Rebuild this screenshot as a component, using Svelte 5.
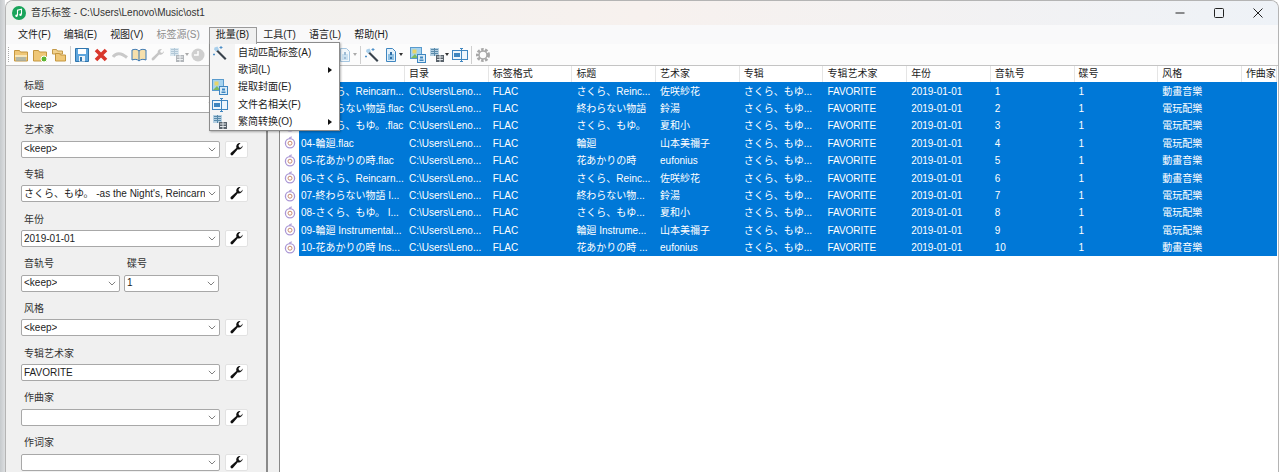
<script>
  const cols = ['', '目录', '标签格式', '标题', '艺术家', '专辑', '专辑艺术家', '年份', '音轨号', '碟号', '风格', '作曲家'];
  const widths = [125, 83.7, 83.7, 83.7, 83.7, 83.7, 83.7, 83.7, 83.7, 83.7, 83.7, 35];
  const G1 = '動畫音樂', G2 = '電玩配樂';
  const rows = [
    ['01-さくら、Reincarn...', 'さくら、Reinc...', '佐咲紗花', G1],
    ['02-終わらない物語.flac', '終わらない物語', '鈴湯', G2],
    ['03-さくら、もゆ。.flac', 'さくら、もゆ。', '夏和小', G2],
    ['04-輪廻.flac', '輪廻', '山本美禰子', G2],
    ['05-花あかりの時.flac', '花あかりの時', 'eufonius', G1],
    ['06-さくら、Reincarn...', 'さくら、Reinc...', '佐咲紗花', G1],
    ['07-終わらない物語 I...', '終わらない物...', '鈴湯', G2],
    ['08-さくら、もゆ。 I...', 'さくら、もゆ...', '夏和小', G2],
    ['09-輪廻 Instrumental...', '輪廻 Instrume...', '山本美禰子', G2],
    ['10-花あかりの時 Ins...', '花あかりの時 ...', 'eufonius', G1]
  ];
  const form = [
    { label: '标题', value: '<keep>' },
    { label: '艺术家', value: '<keep>' },
    { label: '专辑', value: "さくら、もゆ。 -as the Night's, Reincarn" },
    { label: '年份', value: '2019-01-01' }
  ];
  const form2 = [
    { label: '风格', value: '<keep>' },
    { label: '专辑艺术家', value: 'FAVORITE' },
    { label: '作曲家', value: '' },
    { label: '作词家', value: '' }
  ];
</script>

{#snippet wrench()}
  <svg width="15" height="15" viewBox="0 0 14 14"><path d="M12.800 3.200a3.600 3.600 0 0 1-4.600 3.600L3.600 12.200a1.400 1.400 0 0 1-2-1.900l5.300-4.700A3.600 3.600 0 0 1 10.800.9L8.900 3l.4 1.900 1.800.4z" fill="#111"/></svg>
{/snippet}
{#snippet chev()}
  <svg class="chev" width="8" height="5" viewBox="0 0 8 5"><path d="M.8.8L4 4l3.200-3.200" fill="none" stroke="#808080"/></svg>
{/snippet}
{#snippet folder(extra)}
  <svg class="ti" width="16" height="16" viewBox="0 0 16 16">
    {#if extra === 'stack'}<path d="M1.500 2.500h4l1 1.500h5v3h-10z" fill="#f2d28e" stroke="#c49a4a"/>{/if}
    <path d={extra === 'stack' ? 'M4.500 6.500h4l1 1.500h5v6h-10z' : 'M1.500 3.500h5l1 1.500h7v9h-13z'} fill="#efc777" stroke="#c4963f"/>
    {#if extra === 'open'}<path d="M2 8h12v2H2z" fill="#f9e7b8"/><path d="M3 11h10M3 13h10" stroke="#7aa8d4"/>{/if}
    {#if extra === 'new'}<circle cx="12" cy="12" r="3" fill="#5cb531" stroke="#fff"/>{/if}
  </svg>
{/snippet}
{#snippet coverIcon()}
  <svg width="16" height="16" viewBox="0 0 16 16"><rect x=".5" y=".5" width="11" height="11" fill="#a6d3ef" stroke="#5a9bcd"/><rect x="2.500" y="2.500" width="4" height="4" fill="#e8d56a"/><path d="M1 11l4-4 3 4z" fill="#7dbb5f"/><rect x="7.500" y="7.500" width="8" height="8" fill="#d9ecf8" stroke="#3f86c0"/><path d="M10 9.500h3v2h-3zM9.500 12.500h4V14h-4z" fill="#3f86c0"/></svg>
{/snippet}
{#snippet docIcon()}
  <svg width="16" height="16" viewBox="0 0 16 16"><path d="M3.500 1.500h6l3 3v10h-9z" fill="#e4f1fa" stroke="#3f86c0"/><path d="M5 7h6v6H5z" fill="#8fc1e4"/><path d="M7 5h2v3H7zM7 10h2v2H7z" fill="#2f6fa6"/></svg>
{/snippet}
{#snippet renameIcon()}
  <svg width="16" height="16" viewBox="0 0 16 16"><rect x=".5" y="3.500" width="15" height="9" fill="#eef6fc" stroke="#3f86c0"/><rect x="2" y="6" width="6" height="4" fill="#3f86c0"/><path d="M9.500 1.500v13M8 1.500h3M8 14.500h3" stroke="#3f86c0" fill="none"/></svg>
{/snippet}
{#snippet convIcon()}
  <svg width="16" height="16" viewBox="0 0 16 16"><rect x="1" y="1" width="9" height="8" fill="#b5d0e2"/><path d="M2 2.500h7M2 4.500h7M2 6.500h7M5.500 1v8" stroke="#5a8bab"/><rect x="7" y="8" width="8" height="7" fill="#59626b"/><path d="M8 10h6M8 12.500h6M11 8v7" stroke="#dfe4e8"/></svg>
{/snippet}
{#snippet wandIcon()}
  <svg width="16" height="16" viewBox="0 0 16 16"><path d="M5.500 4.500l9 9-1.500 1.500-9-9z" fill="#39434c"/><path d="M2.500 2.500l3-1 1.500 3-3 2-2-2z" fill="#a9cfeb"/><path d="M9 1v3M7.500 2.500h3M2 8.500v2M1 9.500h2" stroke="#4e90c8"/></svg>
{/snippet}
{#snippet discIcon()}
  <svg class="disc" width="12" height="13" viewBox="0 0 12 13"><circle cx="6" cy="7.200" r="4.600" fill="none" stroke="#ab98d6" stroke-width="1.300"/><circle cx="6" cy="7.200" r="2" fill="none" stroke="#c98a6e" stroke-width="1"/><path d="M5.500 2.800C5.500 1.800 6.500 1 8 1" fill="none" stroke="#ab98d6" stroke-width="1.100"/></svg>
{/snippet}

<div class="win">
  <header class="title">
    <svg width="14" height="14" viewBox="0 0 14 14"><circle cx="7" cy="7" r="7" fill="#19a45a"/><path d="M5.500 9.500V4.200l4-.9v5.200" fill="none" stroke="#fff" stroke-width="1.100"/><circle cx="4.500" cy="9.700" r="1.200" fill="#fff"/><circle cx="8.500" cy="8.800" r="1.200" fill="#fff"/></svg>
    <span class="ttext">音乐标签 - C:\Users\Lenovo\Music\ost1</span>
    <div class="caps">
      <svg width="12" height="12" viewBox="0 0 12 12"><path d="M1.500 6h9" stroke="#222"/></svg>
      <svg width="12" height="12" viewBox="0 0 12 12"><rect x="1.500" y="1.500" width="9" height="9" rx="1" fill="none" stroke="#222"/></svg>
      <svg width="12" height="12" viewBox="0 0 12 12"><path d="M1.500 1.500l9 9M10.500 1.500l-9 9" stroke="#222"/></svg>
    </div>
  </header>

  <nav class="menubar">
    <span class="m">文件(F)</span><span class="m">编辑(E)</span><span class="m">视图(V)</span><span class="m dis">标签源(S)</span><span class="m open">批量(B)</span><span class="m">工具(T)</span><span class="m">语言(L)</span><span class="m">帮助(H)</span>
  </nav>

  <div class="toolbar">
    <span class="grip"></span>
    {@render folder('open')}{@render folder('new')}{@render folder('stack')}
    <span class="sep"></span>
    <svg class="ti" width="16" height="16" viewBox="0 0 16 16"><path d="M1.500 1.500h13v13h-13z" fill="#5fa6dd" stroke="#2f75ad"/><rect x="4" y="2" width="8" height="5" fill="#fff"/><rect x="5" y="9" width="6" height="5.500" fill="#eef4f9"/><rect x="6" y="10" width="2" height="4" fill="#2f75ad"/></svg>
    <svg class="ti" width="16" height="16" viewBox="0 0 16 16"><path d="M3 3l10 10M13 3L3 13" stroke="#d9372c" stroke-width="3.600"/></svg>
    <svg class="ti" width="16" height="16" viewBox="0 0 16 16"><path d="M1 10c3-4.500 8-4.500 14 .5" fill="none" stroke="#c9c9c9" stroke-width="3"/></svg>
    <svg class="ti" width="16" height="16" viewBox="0 0 16 16"><path d="M1 3c3-1 5-1 7 1 2-2 4-2 7-1v10c-3-1-5-1-7 1-2-2-4-2-7-1z" fill="#f6e0ac" stroke="#3b78b3"/><path d="M8 4v10" stroke="#3b78b3"/></svg>
    <svg class="ti" width="16" height="16" viewBox="0 0 16 16"><path d="M14 4a3.600 3.600 0 0 1-4.800 3.400L4 13a1.400 1.400 0 0 1-2-2l5.600-5.200A3.600 3.600 0 0 1 12 2L10.200 4l.4 1.600 1.600.4z" fill="#c6c6c6"/></svg>
    <span class="faded">{@render convIcon()}</span><i class="drop gray"></i>
    <svg class="ti clock" width="16" height="16" viewBox="0 0 16 16"><circle cx="8" cy="8" r="6.500" fill="#cfcfcf"/><path d="M8 4v4H4" stroke="#fff" stroke-width="1.500" fill="none"/></svg>
    <span class="hole"></span>
    <span class="faded">{@render docIcon()}</span><i class="drop gray"></i>
    <span class="sep"></span>
    <span class="tw">{@render wandIcon()}</span>
    <span class="tw">{@render docIcon()}</span><i class="drop"></i>
    <span class="tw cov">{@render coverIcon()}</span>
    <span class="tw">{@render convIcon()}</span><i class="drop"></i>
    <span class="tw">{@render renameIcon()}</span>
    <span class="sep"></span>
    <svg class="ti" width="16" height="16" viewBox="0 0 16 16"><circle cx="8" cy="8" r="5.500" fill="none" stroke="#a8a8a8" stroke-width="3" stroke-dasharray="2.500 1.400"/><circle cx="8" cy="8" r="4" fill="none" stroke="#a8a8a8" stroke-width="1.500"/></svg>
  </div>

  <main class="body">
    <aside class="pane">
      {#each form as f}
        <div class="grp">
          <div class="lab">{f.label}</div>
          <div class="line">
            <div class="combo"><span>{f.value}</span>{@render chev()}</div>
            <button class="wr">{@render wrench()}</button>
          </div>
        </div>
      {/each}
      <div class="grp two">
        <div class="half first"><div class="lab">音轨号</div><div class="line"><div class="combo"><span>&lt;keep&gt;</span>{@render chev()}</div></div></div>
        <div class="half second"><div class="lab">碟号</div><div class="line"><div class="combo"><span>1</span>{@render chev()}</div></div></div>
      </div>
      {#each form2 as f}
        <div class="grp">
          <div class="lab">{f.label}</div>
          <div class="line">
            <div class="combo"><span>{f.value}</span>{@render chev()}</div>
            <button class="wr">{@render wrench()}</button>
          </div>
        </div>
      {/each}
    </aside>
    <div class="split"></div>
    <div class="gutter"></div>
    <section class="table">
      <div class="thead">
        {#each cols as c, i}<div class="th" style="width:{widths[i]}px">{c}</div>{/each}
      </div>
      {#each rows as r, i}
        <div class="tr">
          <div class="icon">{@render discIcon()}</div>
          <div class="cells">
            <div class="td name">{r[0]}</div>
            <div class="td">C:\Users\Leno...</div>
            <div class="td">FLAC</div>
            <div class="td">{r[1]}</div>
            <div class="td">{r[2]}</div>
            <div class="td">さくら、もゆ...</div>
            <div class="td">FAVORITE</div>
            <div class="td">2019-01-01</div>
            <div class="td">{i + 1}</div>
            <div class="td">1</div>
            <div class="td">{r[3]}</div>
          </div>
        </div>
      {/each}
    </section>
  </main>

  <div class="popup">
    <div class="mi"><span class="mic">{@render wandIcon()}</span>自动匹配标签(A)</div>
    <div class="mi"><span class="mic"></span>歌词(L)<i class="arr"></i></div>
    <div class="mi"><span class="mic">{@render coverIcon()}</span>提取封面(E)</div>
    <div class="mi"><span class="mic">{@render renameIcon()}</span>文件名相关(F)</div>
    <div class="mi"><span class="mic">{@render convIcon()}</span>繁简转换(O)<i class="arr"></i></div>
  </div>
</div>

<style>
  :global(body) { margin: 0; background: #fff; }
  :global(#app) { height: 472px; background: linear-gradient(90deg, #c6cacd 0, #dcdee0 5px, #fff 5px); overflow: hidden; }
  .win {
    position: relative; box-sizing: border-box; margin-left: 5px; width: 1274px; height: 472px;
    border: 1px solid #b4b4b4; border-bottom: 0; border-radius: 8px 8px 0 0; overflow: hidden;
    font: 10px/14px "Liberation Sans", "Noto Sans CJK SC", sans-serif; color: #1c1c1c;
    display: flex; flex-direction: column; background: #f0f0f0;
  }
  .title {
    height: 24px; flex: none; display: flex; align-items: center; padding-left: 6px; gap: 5px;
    background: linear-gradient(90deg, #eef0ee 0%, #f7f1ee 50%, #eef2f7 100%);
  }
  .ttext { color: #333; }
  .caps { margin-left: auto; display: flex; gap: 27px; padding-right: 14px; }
  .menubar { height: 19px; flex: none; display: flex; padding-left: 5.500px; background: #f9f9fa; line-height: 20px; }
  .m { padding: 0 6.500px; flex: none; white-space: nowrap; }
  .dis { color: #8e8e8e; }
  .open {
    box-sizing: border-box; height: 17px; margin: 2px 0 0 3px; line-height: 14px; padding: 0 6.500px 0 5.500px;
    background: #f0f0f0; border: 1px solid #9a9a9a; border-bottom: 0; position: relative; z-index: 3;
  }
  .toolbar {
    box-sizing: border-box; height: 22px; flex: none; display: flex; align-items: center; padding-left: 2px;
    background: #fcfcfc; border-bottom: 1px solid #c4c4c4; gap: 3px;
  }
  .grip { width: 1px; height: 15px; margin-right: 1px; border-left: 1px dotted #aaa; box-sizing: border-box; }
  .ti { flex: none; }
  .sep { width: 1px; height: 18px; background: #cfcfcf; flex: none; }
  .drop { width: 0; height: 0; border: 2px solid transparent; border-top: 3px solid #333; border-bottom: 0; margin-left: -3px; flex: none; }
  .drop.gray { border-top-color: #aaa; }
  .faded { opacity: .45; display: flex; flex: none; }
  .tw { display: flex; flex: none; }
  .cov { margin-left: 4px; }
  .clock { margin-left: -2px; }
  .hole { width: 125px; flex: none; }
  .body { flex: 1; display: flex; min-height: 0; }
  .pane { width: 260px; background: #f0f0f0; flex: none; box-sizing: border-box; padding: 10.500px 0 0 15px; overflow: hidden; }
  .grp { height: 44.700px; }
  .lab { height: 17px; line-height: 17px; color: #333; padding-left: 3px; }
  .line { display: flex; gap: 5px; margin-top: 2.500px; }
  .combo {
    box-sizing: border-box; height: 17px; width: 199px; flex: none; background: #fff; border: 1px solid #a8a8a8; border-radius: 2px;
    display: flex; align-items: center; justify-content: space-between; padding: 0 3px 0 2px; white-space: nowrap; overflow: hidden; color: #1c1c1c;
  }
  .combo span { overflow: hidden; }
  .chev { flex: none; }
  .wr { width: 23px; height: 17px; flex: none; border: 1px solid #e2e2e2; border-radius: 2px; background: #fff; padding: 0; display: flex; align-items: center; justify-content: center; }
  .two { display: flex; gap: 4px; }
  .first { width: 99px; }
  .second { width: 95px; }
  .half .combo { width: 100%; }
  .split { width: 2px; background: #8a8a8a; flex: none; }
  .gutter { width: 11px; flex: none; background: #f0f0f0; }
  .table { flex: 1; background: #fff; border-left: 1px solid #888; min-width: 0; overflow: hidden; }
  .thead { display: flex; height: 16px; background: #fff; }
  .th { flex: none; box-sizing: border-box; border-right: 1px solid #e5e5e5; padding-left: 4px; line-height: 16px; white-space: nowrap; overflow: hidden; }
  .tr { display: flex; height: 17.400px; }
  .icon { width: 19px; flex: none; display: flex; justify-content: center; align-items: center; }
  .cells {
    display: grid; grid-template-columns: 106px repeat(10, 83.700px); align-items: center;
    background: #0078d7; color: #fff; flex: none; width: 978px; padding-top: 2px; box-sizing: border-box;
  }
  .td { padding-left: 4px; box-sizing: border-box; white-space: nowrap; overflow: hidden; }
  .td.name { padding-left: 2px; }
  .popup {
    position: absolute; left: 203px; top: 41px; width: 131px; height: 89px; box-sizing: border-box; z-index: 2;
    background: linear-gradient(90deg, #f5f5f5 0, #f5f5f5 25px, #fff 25px); border: 1px solid #8c8c8c; box-shadow: 1px 1px 2px rgba(0,0,0,.3); padding-top: 1px;
  }
  .mi { height: 17.300px; display: flex; align-items: center; position: relative; }
  .mic { width: 28px; flex: none; display: flex; padding-left: 2px; box-sizing: border-box; }
  .arr { position: absolute; right: 7px; top: 6px; width: 0; height: 0; border: 3px solid transparent; border-left: 4px solid #111; border-right: 0; }
</style>
